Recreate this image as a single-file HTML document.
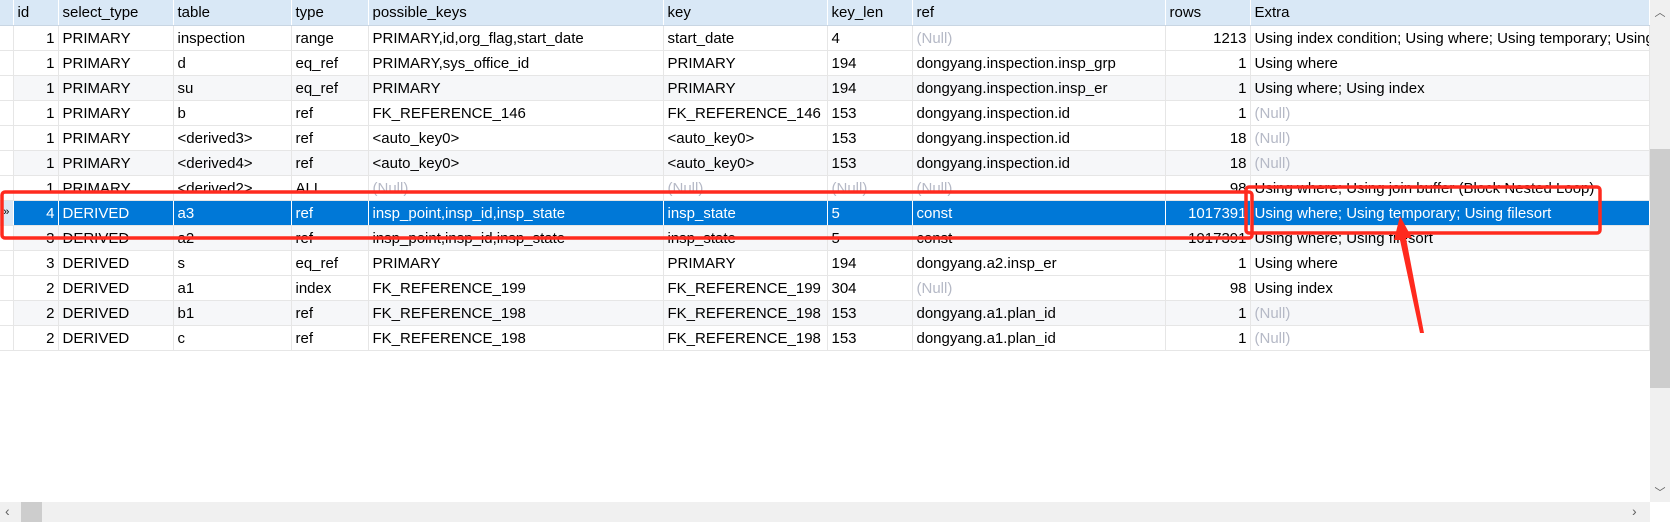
<!DOCTYPE html>
<html><head><meta charset="utf-8"><style>
body{margin:0;width:1670px;height:522px;overflow:hidden;background:#fff;font-family:"Liberation Sans","Noto Sans CJK SC",sans-serif;font-size:15px;position:relative}
table{position:absolute;left:0;top:0;border-collapse:collapse;table-layout:fixed;width:1649px}
tr{height:25px}
td{height:23px;padding:1px 0 0 4px;border:1px solid #e6e6e6;border-top:none;border-left:none;white-space:nowrap;overflow:hidden;color:#000;line-height:23px;box-sizing:border-box}
tr.h td{background:#d9e8f6;border-right:1px solid #fff;border-bottom:1px solid #c9d6e3}
tr.g td{background:#f6f7f9}
td.n{text-align:right;padding:1px 3px 0 0}
td.i{background:#fff !important;padding:0}
.nl{color:#b5b9c6}
tr.s td{background:#0078d7 !important;color:#fff;border-right-color:#fff}
tr.s td.i{background:#dce8f4 !important;color:#000}
.vs{position:absolute;left:1650px;top:0;width:20px;height:502px;background:#f0f0f0}
.hs{position:absolute;left:0;top:502px;width:1650px;height:20px;background:#f0f0f0}
</style></head><body>
<table>
<colgroup><col style="width:13px"><col style="width:45px"><col style="width:115px"><col style="width:118px"><col style="width:77px"><col style="width:295px"><col style="width:164px"><col style="width:85px"><col style="width:253px"><col style="width:85px"><col style="width:399px"></colgroup>
<tr class="h"><td class="i" style="background:#d9e8f6!important"></td><td>id</td><td>select_type</td><td>table</td><td>type</td><td>possible_keys</td><td>key</td><td>key_len</td><td>ref</td><td>rows</td><td>Extra</td></tr>
<tr><td class="i"></td><td class="n">1</td><td>PRIMARY</td><td>inspection</td><td>range</td><td>PRIMARY,id,org_flag,start_date</td><td>start_date</td><td>4</td><td class="nl">(Null)</td><td class="n">1213</td><td>Using index condition; Using where; Using temporary; Using filesort</td></tr>
<tr><td class="i"></td><td class="n">1</td><td>PRIMARY</td><td>d</td><td>eq_ref</td><td>PRIMARY,sys_office_id</td><td>PRIMARY</td><td>194</td><td>dongyang.inspection.insp_grp</td><td class="n">1</td><td>Using where</td></tr>
<tr class="g"><td class="i"></td><td class="n">1</td><td>PRIMARY</td><td>su</td><td>eq_ref</td><td>PRIMARY</td><td>PRIMARY</td><td>194</td><td>dongyang.inspection.insp_er</td><td class="n">1</td><td>Using where; Using index</td></tr>
<tr><td class="i"></td><td class="n">1</td><td>PRIMARY</td><td>b</td><td>ref</td><td>FK_REFERENCE_146</td><td>FK_REFERENCE_146</td><td>153</td><td>dongyang.inspection.id</td><td class="n">1</td><td class="nl">(Null)</td></tr>
<tr><td class="i"></td><td class="n">1</td><td>PRIMARY</td><td>&lt;derived3&gt;</td><td>ref</td><td>&lt;auto_key0&gt;</td><td>&lt;auto_key0&gt;</td><td>153</td><td>dongyang.inspection.id</td><td class="n">18</td><td class="nl">(Null)</td></tr>
<tr class="g"><td class="i"></td><td class="n">1</td><td>PRIMARY</td><td>&lt;derived4&gt;</td><td>ref</td><td>&lt;auto_key0&gt;</td><td>&lt;auto_key0&gt;</td><td>153</td><td>dongyang.inspection.id</td><td class="n">18</td><td class="nl">(Null)</td></tr>
<tr><td class="i"></td><td class="n">1</td><td>PRIMARY</td><td>&lt;derived2&gt;</td><td>ALL</td><td class="nl">(Null)</td><td class="nl">(Null)</td><td class="nl">(Null)</td><td class="nl">(Null)</td><td class="n">98</td><td>Using where; Using join buffer (Block Nested Loop)</td></tr>
<tr class="s"><td class="i" style="font-size:11px;text-align:center">»</td><td class="n">4</td><td>DERIVED</td><td>a3</td><td>ref</td><td>insp_point,insp_id,insp_state</td><td>insp_state</td><td>5</td><td>const</td><td class="n">1017391</td><td>Using where; Using temporary; Using filesort</td></tr>
<tr class="g"><td class="i"></td><td class="n">3</td><td>DERIVED</td><td>a2</td><td>ref</td><td>insp_point,insp_id,insp_state</td><td>insp_state</td><td>5</td><td>const</td><td class="n">1017391</td><td>Using where; Using filesort</td></tr>
<tr><td class="i"></td><td class="n">3</td><td>DERIVED</td><td>s</td><td>eq_ref</td><td>PRIMARY</td><td>PRIMARY</td><td>194</td><td>dongyang.a2.insp_er</td><td class="n">1</td><td>Using where</td></tr>
<tr><td class="i"></td><td class="n">2</td><td>DERIVED</td><td>a1</td><td>index</td><td>FK_REFERENCE_199</td><td>FK_REFERENCE_199</td><td>304</td><td class="nl">(Null)</td><td class="n">98</td><td>Using index</td></tr>
<tr class="g"><td class="i"></td><td class="n">2</td><td>DERIVED</td><td>b1</td><td>ref</td><td>FK_REFERENCE_198</td><td>FK_REFERENCE_198</td><td>153</td><td>dongyang.a1.plan_id</td><td class="n">1</td><td class="nl">(Null)</td></tr>
<tr><td class="i"></td><td class="n">2</td><td>DERIVED</td><td>c</td><td>ref</td><td>FK_REFERENCE_198</td><td>FK_REFERENCE_198</td><td>153</td><td>dongyang.a1.plan_id</td><td class="n">1</td><td class="nl">(Null)</td></tr>
</table>
<div class="vs"><div style="position:absolute;top:149px;left:0;width:20px;height:239px;background:#cdcdcd"></div>
<div style="position:absolute;top:4px;left:0;width:20px;text-align:center;color:#606060;font-size:11px">︿</div>
<div style="position:absolute;top:484px;left:0;width:20px;text-align:center;color:#606060;font-size:11px">﹀</div></div>
<div class="hs"><div style="position:absolute;left:21px;top:0;width:21px;height:20px;background:#cdcdcd"></div>
<div style="position:absolute;left:5px;top:1px;color:#606060;font-size:14px">‹</div>
<div style="position:absolute;left:1632px;top:1px;color:#606060;font-size:14px">›</div></div>
<svg style="position:absolute;left:0;top:0" width="1670" height="522">
<rect x="2" y="192" width="1250" height="46" rx="3" fill="none" stroke="#ff2a1e" stroke-width="3.5"/>
<rect x="1246" y="187" width="354" height="46" rx="3" fill="none" stroke="#ff2a1e" stroke-width="3.5"/>
<polygon points="1400,216 1412,238 1406,238 1424,333 1420,333 1400,240 1394,240" fill="#ff2a1e"/>
</svg>
</body></html>
